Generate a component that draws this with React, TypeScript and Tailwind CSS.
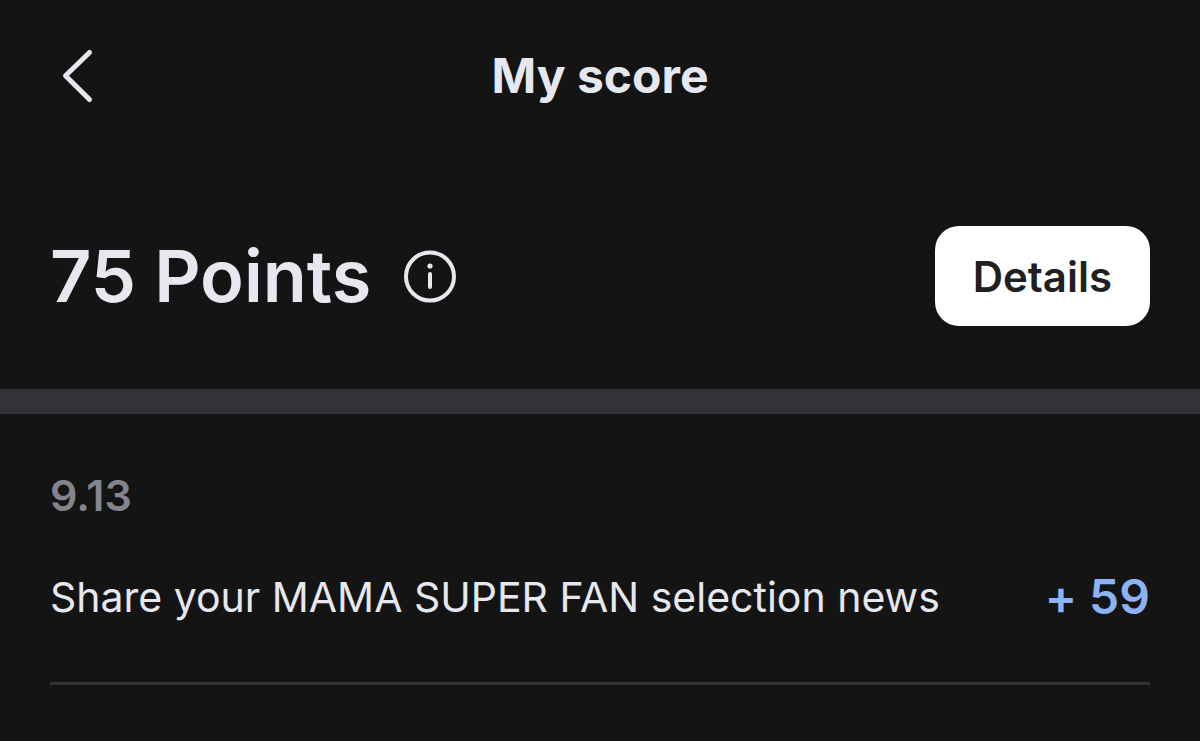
const entries = [
  { date: '9.13', title: 'Share your MAMA SUPER FAN selection news', points: '+ 59' },
];

export default function App() {
  return (
    <main className="min-h-screen bg-[#141414] font-['Inter',sans-serif] text-[#e7e8ef]">
      <header className="grid grid-cols-[1fr_auto_1fr] items-center px-[50px] pt-10">
        <button type="button" aria-label="Back" className="w-14 py-2">
          <svg className="h-14 w-14" viewBox="0 0 56 56" fill="none" stroke="currentColor" strokeWidth="5" strokeLinecap="round" strokeLinejoin="round" aria-hidden="true">
            <path d="M39.500 4.500 L15.500 27.700 L39.500 51.500" />
          </svg>
        </button>
        <h1 className="text-[48px] leading-[72px] font-bold">My score</h1>
      </header>
      <section className="flex items-center justify-between px-[50px] pt-[114px] pb-[63px]">
        <div className="flex items-center gap-8">
          <p className="text-[72px] leading-[100px] font-semibold">75 Points</p>
          <button type="button" aria-label="About points">
            <svg className="h-[54px] w-[54px]" viewBox="0 0 54 54" fill="none" stroke="currentColor" strokeWidth="4" strokeLinecap="round" aria-hidden="true">
              <circle cx="27" cy="27.500" r="24" />
              <path d="M27 25 V38" />
              <circle cx="27" cy="17" r="2.600" fill="currentColor" stroke="none" />
            </svg>
          </button>
        </div>
        <button type="button" className="h-[100px] rounded-3xl bg-white px-[38px] text-[42px] font-semibold text-[#202023]">Details</button>
      </section>
      <div className="h-[25px] bg-[#333236]" />
      <section className="px-[50px] pt-[51px]">
        {entries.map((entry) => (
          <article key={entry.title}>
            <h2 className="text-[43px] leading-[60px] font-semibold text-[#84858c]">{entry.date}</h2>
            <div className="mt-9 flex items-center justify-between border-b-3 border-[#333236] pb-[49px]">
              <p className="text-[41px] leading-[72px]">{entry.title}</p>
              <p className="text-[48px] leading-[72px] font-semibold text-[#8cb3f4] [font-feature-settings:'calt'_0]">{entry.points}</p>
            </div>
          </article>
        ))}
      </section>
    </main>
  );
}
